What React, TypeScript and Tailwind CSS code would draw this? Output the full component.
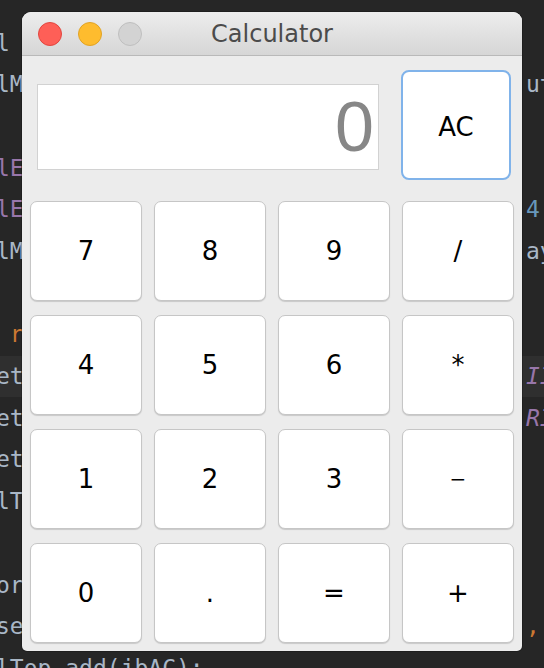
import React from 'react';

type Line = { left: string; leftColor?: string; right?: string; rightColor?: string; italic?: boolean; current?: boolean };

const GRAY = 'text-[#a9b7c6]';
const PURPLE = 'text-[#9876aa]';
const ORANGE = 'text-[#cc7832]';
const BLUE = 'text-[#6897bb]';

const codeLines: Line[] = [
  { left: 'l' },
  { left: 'lM', right: 'ut' },
  { left: '' },
  { left: 'lE', leftColor: PURPLE },
  { left: 'lE', leftColor: PURPLE, right: '4', rightColor: BLUE },
  { left: 'lM', right: 'ay' },
  { left: '' },
  { left: ' r', leftColor: ORANGE },
  { left: 'et', right: 'II', rightColor: PURPLE, italic: true, current: true },
  { left: 'et', right: 'RI', rightColor: PURPLE, italic: true },
  { left: 'et' },
  { left: 'lT' },
  { left: '' },
  { left: 'or' },
  { left: 'se', right: ',', rightColor: ORANGE },
  { left: 'lTop.add(jbAC);' },
];

const keys = ['7', '8', '9', '/', '4', '5', '6', '*', '1', '2', '3', '-', '0', '.', '=', '+'];

function CodeBehind() {
  return (
    <div className="pt-[22px] font-['DejaVu_Sans_Mono',monospace] text-[23px]">
      {codeLines.map((line, i) => (
        <div
          key={i}
          className={`flex h-[41.7px] items-center whitespace-pre ${line.current ? 'bg-[#2f2f2f]' : ''}`}
        >
          <span className={`ml-[-4px] flex-1 ${line.leftColor ?? GRAY}`}>{line.left}</span>
          <span className={`w-[18px] overflow-visible ${line.rightColor ?? GRAY} ${line.italic ? 'italic' : ''}`}>
            {line.right ?? ''}
          </span>
        </div>
      ))}
    </div>
  );
}

function TitleBar() {
  return (
    <div className="grid h-[44px] grid-cols-[1fr_auto_1fr] items-center border-b border-[#b9b9b9] bg-gradient-to-b from-[#ededed] to-[#d6d6d6]">
      <div className="flex items-center gap-[16px] pl-[16px]">
        <span className="h-[24px] w-[24px] rounded-full border border-[#e2463f] bg-[#fe5f57]" />
        <span className="h-[24px] w-[24px] rounded-full border border-[#e1a325] bg-[#febc2e]" />
        <span className="h-[24px] w-[24px] rounded-full border border-[#bfbfbf] bg-[#d3d3d3]" />
      </div>
      <span className="text-[24px] text-[#4b4b4b]">Calculator</span>
      <div />
    </div>
  );
}

export default function App() {
  return (
    <div className="relative h-[668px] w-[544px] overflow-hidden bg-[#262626]">
      <CodeBehind />

      <div className="absolute left-[22px] top-[12px] w-[500px] overflow-hidden rounded-t-[9px] rounded-b-[5px] bg-[#ececec] font-['DejaVu_Sans',sans-serif] shadow-[0_0_0_1px_rgba(0,0,0,0.2)]">
        <TitleBar />

        <div className="px-[8px] pb-[8px] pt-[14px]">
          <div className="flex h-[110px] items-center">
            <div className="ml-[7px] mt-[3px] flex h-[86px] w-[342px] items-center justify-end border border-[#d2d2d2] bg-white pr-[4px] font-['Liberation_Sans',sans-serif] text-[70px] leading-none text-[#878787]">
              0
            </div>
            <button className="ml-[22px] h-[110px] w-[110px] rounded-[8px] border-2 border-[#80b3ea] bg-white pt-[4px] text-[26px] text-black">
              AC
            </button>
          </div>

          <div className="mt-[21px] grid grid-cols-4 gap-x-[12px] gap-y-[14px]">
            {keys.map((k) => (
              <button
                key={k}
                className={`h-[100px] rounded-[7px] border border-[#c6c6c6] bg-white text-black shadow-[0_1px_1px_rgba(0,0,0,0.15)] ${
                  k === '-' ? 'text-[20px]' : 'text-[26px]'
                }`}
              >
                {k === '-' ? '−' : k}
              </button>
            ))}
          </div>
        </div>
      </div>
    </div>
  );
}
